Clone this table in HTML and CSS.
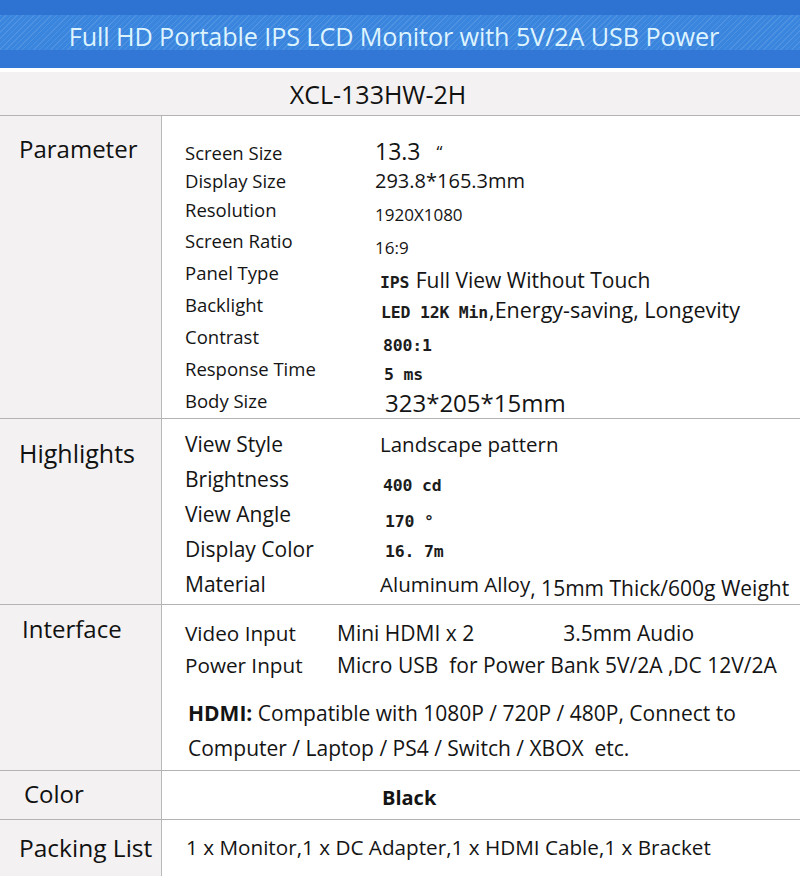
FILE: index.html
```html
<!DOCTYPE html>
<html lang="en">
<head>
<meta charset="utf-8">
<title>XCL-133HW-2H Specifications</title>
<link rel="stylesheet" href="styles.css">
</head>
<body>
<div class="sheet">
  <header class="banner">
    <div class="banner-band">
      <h1 class="banner-title">Full HD Portable IPS LCD Monitor with 5V/2A USB Power</h1>
    </div>
  </header>
  <div class="model">XCL-133HW-2H</div>

  <section class="group group-param">
    <div class="group-head">Parameter</div>
    <div class="group-body param-list">
      <div class="spec r28"><span class="k">Screen Size</span><span class="v v-big up2">13.3<span class="quote">“</span></span></div>
      <div class="spec r28"><span class="k">Display Size</span><span class="v">293.8*165.3mm</span></div>
      <div class="spec r30"><span class="k">Resolution</span><span class="v v-sm dn5">1920X1080</span></div>
      <div class="spec"><span class="k">Screen Ratio</span><span class="v v-sm dn7">16:9</span></div>
      <div class="spec"><span class="k">Panel Type</span><span class="v v-wide dn7 in5"><span class="mono">IPS</span> Full View Without Touch</span></div>
      <div class="spec"><span class="k">Backlight</span><span class="v v-wider dn5 in6"><span class="mono">LED 12K Min</span>,Energy-saving, Longevity</span></div>
      <div class="spec"><span class="k">Contrast</span><span class="v dn7 in8"><span class="mono">800:1</span></span></div>
      <div class="spec"><span class="k">Response Time</span><span class="v dn4 in9"><span class="mono">5 ms</span></span></div>
      <div class="spec"><span class="k">Body Size</span><span class="v v-xl dn2 in10">323*205*15mm</span></div>
    </div>
  </section>

  <section class="group group-high">
    <div class="group-head">Highlights</div>
    <div class="group-body high-list">
      <div class="spec"><span class="k">View Style</span><span class="v in5">Landscape pattern</span></div>
      <div class="spec"><span class="k">Brightness</span><span class="v dn4 in8"><span class="mono">400 cd</span></span></div>
      <div class="spec"><span class="k">View Angle</span><span class="v dn5 in10"><span class="mono">170 °</span></span></div>
      <div class="spec"><span class="k">Display Color</span><span class="v in10"><span class="mono">16. 7m</span></span></div>
      <div class="spec"><span class="k">Material</span><span class="v in5">Aluminum Alloy<span class="tail">, 15mm Thick/600g Weight</span></span></div>
    </div>
  </section>

  <section class="group group-iface">
    <div class="group-head head-iface">Interface</div>
    <div class="group-body iface-body">
      <div class="iface-row"><span class="k">Video Input</span><span class="v">Mini HDMI x 2</span><span class="v audio">3.5mm Audio</span></div>
      <div class="iface-row"><span class="k">Power Input</span><span class="v">Micro USB&nbsp; for Power Bank 5V/2A ,DC 12V/2A</span></div>
      <p class="hdmi"><b>HDMI:</b> Compatible with 1080P / 720P / 480P, Connect to<br>Computer / Laptop / PS4 / Switch / XBOX&nbsp; etc.</p>
    </div>
  </section>

  <section class="group group-color">
    <div class="group-head head-color">Color</div>
    <div class="group-body color-body"><b>Black</b></div>
  </section>

  <section class="group group-pack">
    <div class="group-head">Packing List</div>
    <div class="group-body pack-body">1 x Monitor,1 x DC Adapter,1 x HDMI Cable,1 x Bracket</div>
  </section>
</div>
</body>
</html>
```

FILE: styles.css
```css
* { box-sizing: border-box; }

html, body {
  margin: 0;
  padding: 0;
  background: #ffffff;
}

body {
  font-family: "Open Sans", "Liberation Sans", sans-serif;
  color: #141414;
}

.sheet {
  width: 800px;
  height: 880px;
  overflow: hidden;
  background: #ffffff;
}

/* banner */
.banner {
  height: 68px;
  background: #3277d5;
  border-top: 15px solid #2f73d2;
}

.banner-band {
  height: 35px;
  background-color: #3a85de;
  background-image: repeating-linear-gradient(135deg, rgba(255,255,255,0.10) 0 1px, rgba(255,255,255,0) 1px 4px);
  display: flex;
  align-items: center;
  justify-content: center;
  padding: 7px 12px 0 0;
}

.banner-title {
  margin: 0;
  font-weight: 400;
  font-size: 25.2px;
  letter-spacing: -0.1px;
  color: #ddf4ff;
  white-space: nowrap;
}

.model {
  margin-top: 4px;
  height: 44px;
  background: #f3f1f1;
  border-bottom: 1px solid #b3b3b3;
  display: flex;
  align-items: center;
  justify-content: center;
  font-size: 25px;
  color: #111;
  padding-right: 44px;
}

/* groups */
.group {
  display: flex;
  border-bottom: 1px solid #b3b3b3;
}

.group-head {
  width: 162px;
  flex: none;
  background: #f3f1f1;
  border-right: 1px solid #b8b8b8;
  font-size: 24px;
  padding-left: 19px;
  color: #111;
}

.group-body {
  flex: 1;
  background: #ffffff;
}

.spec {
  display: flex;
  align-items: flex-start;
}

.k { display: block; flex: none; width: 190px; white-space: nowrap; }
.v { display: block; white-space: nowrap; }

/* parameter */
.group-param { height: 303px; }
.group-param .group-head { padding-top: 16px; }
.param-list { padding: 23px 0 0 23px; }
.param-list .spec { height: 32px; line-height: 32px; }
.param-list .spec.r28 { height: 28px; line-height: 28px; }
.param-list .spec.r30 { height: 30px; line-height: 30px; }
.param-list .k { font-size: 18.5px; }
.param-list .v { font-size: 20px; }
.param-list .v-big { font-size: 23px; }
.param-list .v-sm { font-size: 17px; }
.param-list .v-wide { font-size: 21px; }
.param-list .v-wider { font-size: 21.5px; }
.param-list .v-xl { font-size: 24px; }
.quote { font-size: 17px; margin-left: 16px; vertical-align: 2px; }

.mono {
  font-family: "DejaVu Sans Mono", "Liberation Mono", monospace;
  font-weight: 700;
  font-size: 16.5px;
  letter-spacing: -0.2px;
  color: #1c1c1c;
  margin-right: 1px;
}

.up2 { margin-top: -2px; }
.dn2 { padding-top: 2px; }
.dn4 { padding-top: 4px; }
.dn5 { padding-top: 5px; }
.dn7 { padding-top: 7px; }
.in5 { padding-left: 5px; }
.in6 { padding-left: 6px; }
.in8 { padding-left: 8px; }
.in9 { padding-left: 9px; }
.in10 { padding-left: 10px; }

/* highlights */
.group-high { height: 186px; }
.group-high .group-head { padding-top: 17px; font-size: 25px; }
.high-list { padding: 8px 0 0 23px; }
.high-list .spec { height: 35px; line-height: 35px; }
.high-list .k { font-size: 21px; }
.high-list .v { font-size: 20.5px; }
.tail { display: inline-block; font-size: 21px; vertical-align: -4px; }

/* interface */
.group-iface { height: 166px; }
.head-iface { padding-top: 7px; padding-left: 22px; }
.iface-body { padding: 12px 0 0 23px; font-size: 21px; }
.iface-row {
  display: flex;
  align-items: center;
  height: 32px;
}
.iface-row .k { width: 152px; flex: none; font-size: 20.7px; }
.iface-row .audio { margin-left: 89px; }
.hdmi {
  margin: 15px 0 0 3px;
  line-height: 35px;
  font-size: 21px;
}

/* color */
.group-color { height: 49px; }
.head-color { padding-top: 6px; padding-left: 24px; }
.color-body {
  display: flex;
  align-items: center;
  padding-left: 220px;
  padding-top: 4px;
  font-size: 20px;
}

/* packing */
.group-pack { height: 56px; border-bottom: none; }
.group-pack .group-head { display: flex; align-items: center; font-size: 24.5px; padding-bottom: 2px; }
.pack-body {
  display: flex;
  align-items: center;
  padding-left: 24px;
  padding-bottom: 2px;
  font-size: 20.7px;
}
```
